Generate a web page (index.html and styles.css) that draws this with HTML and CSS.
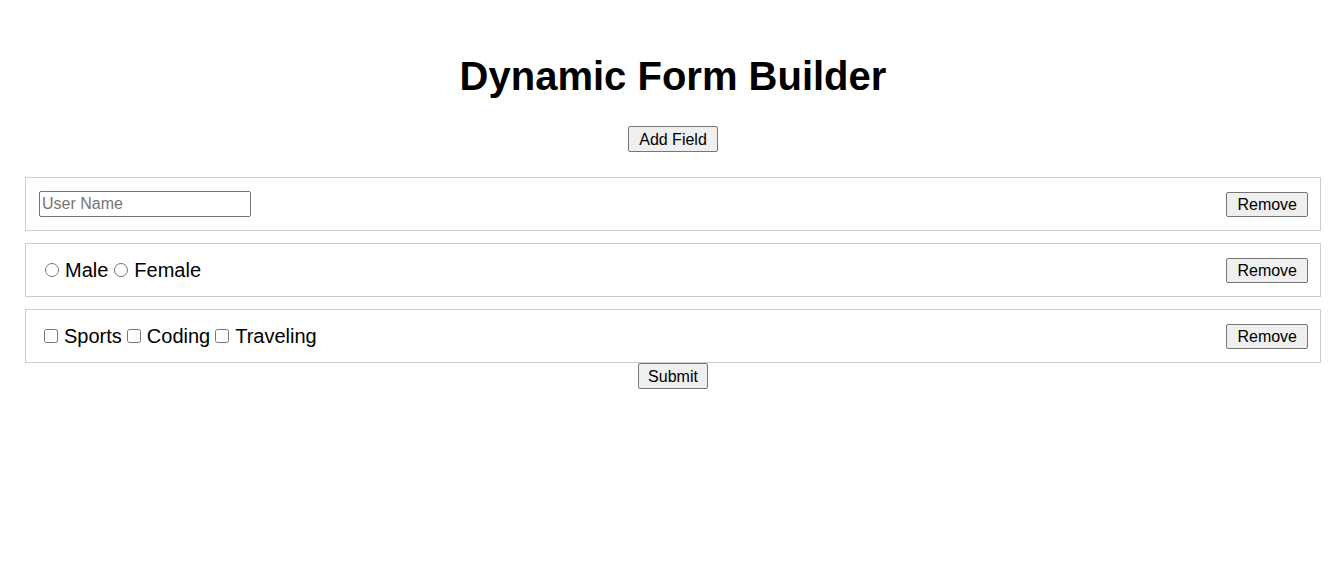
FILE: index.html
```html
<!DOCTYPE html>
<html>
<head>
<meta charset="utf-8">
<link rel="stylesheet" href="styles.css">
</head>
<body>
<div class="app">
  <h1 class="title">Dynamic Form Builder</h1>
  <div class="center top-actions"><button class="btn" type="button">Add Field</button></div>
  <form class="form">
    <div class="fields">
      <div class="field">
        <input class="text-input" type="text" placeholder="User Name">
        <button class="btn" type="button">Remove</button>
      </div>
      <div class="field">
        <div class="options">
          <label class="opt"><input type="radio" name="g" class="radio">Male</label>
          <label class="opt"><input type="radio" name="g" class="radio">Female</label>
        </div>
        <button class="btn" type="button">Remove</button>
      </div>
      <div class="field">
        <div class="options">
          <label class="opt"><input type="checkbox" class="check">Sports</label>
          <label class="opt"><input type="checkbox" class="check">Coding</label>
          <label class="opt"><input type="checkbox" class="check">Traveling</label>
        </div>
        <button class="btn" type="button">Remove</button>
      </div>
    </div>
    <div class="center"><button class="btn btn-submit" type="submit">Submit</button></div>
  </form>
</div>
</body>
</html>
```
FILE: styles.css
```css
html, body {
  margin: 0;
  padding: 0;
  background: #fff;
}
body {
  font-family: "Liberation Sans", Arial, sans-serif;
  color: #000;
}
.app {
  padding: 0 23px 0 25px;
}
.title {
  margin: 0;
  padding-top: 52px;
  font-size: 40px;
  line-height: 48px;
  font-weight: bold;
  text-align: center;
}
.center {
  display: flex;
  justify-content: center;
}
.top-actions {
  margin-top: 26px;
  margin-bottom: 25px;
}
.btn {
  font-family: "Liberation Sans", Arial, sans-serif;
  font-size: 16px;
  line-height: 19px;
  height: 25px;
  padding: 1px 10px;
  border: 1px solid #767676;
  border-radius: 2px;
  background: #efefef;
  color: #000;
}
.top-actions .btn {
  height: 26px;
}
.btn-submit {
  height: 26px;
  padding: 1px 9px;
}
.fields {
  display: flex;
  flex-direction: column;
  gap: 12px;
}
.field {
  display: flex;
  align-items: center;
  justify-content: space-between;
  border: 1px solid #ccc;
  height: 52px;
  padding: 0 12px 0 13px;
}
.text-input {
  width: 212px;
  height: 26px;
  box-sizing: border-box;
  font-family: "Liberation Sans", Arial, sans-serif;
  font-size: 16px;
  padding: 1px 2px;
  border: 1px solid #767676;
  border-radius: 2px;
}
.text-input::placeholder {
  color: #757575;
}
.options {
  display: flex;
  align-items: center;
  gap: 5px;
  font-size: 20px;
  padding-left: 5px;
}
.opt {
  display: inline-flex;
  align-items: center;
}
.radio, .check {
  width: 14px;
  height: 14px;
  margin: 0 6px 0 0;
}
.radio {
  margin-left: 1px;
}
```
